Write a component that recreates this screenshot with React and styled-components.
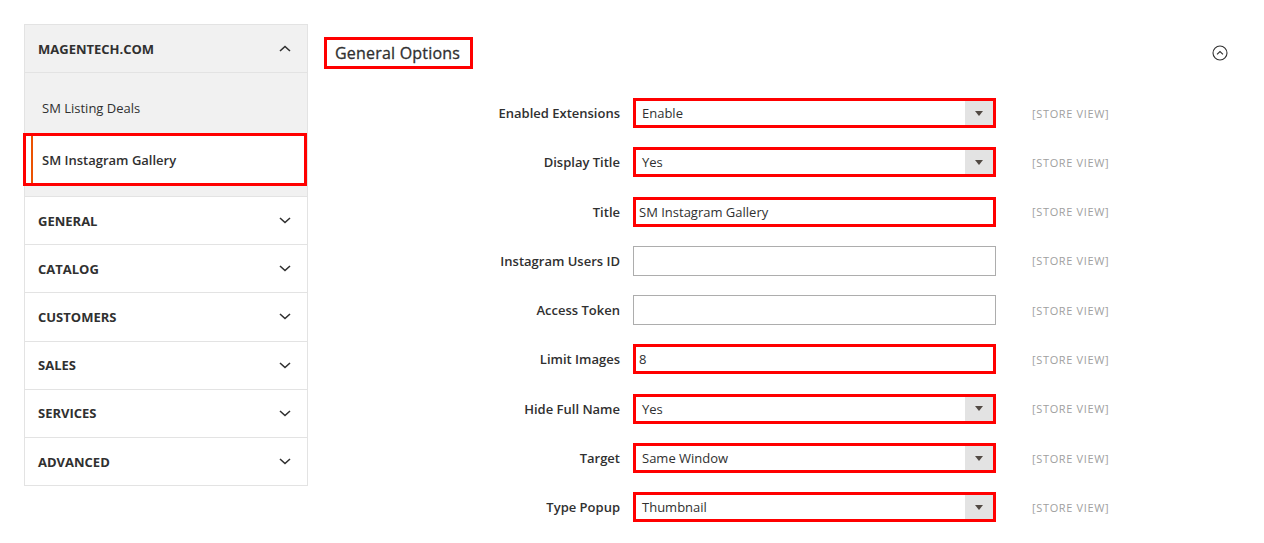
import React from 'react';
import styled, { createGlobalStyle } from 'styled-components';

const GlobalStyle = createGlobalStyle`
  body {
    margin: 0;
    background: #ffffff;
    font-family: 'Open Sans', 'Noto Sans', sans-serif;
    color: #303030;
  }
`;

const sections = ['GENERAL', 'CATALOG', 'CUSTOMERS', 'SALES', 'SERVICES', 'ADVANCED'];

const fields = [
  { label: 'Enabled Extensions', type: 'select', value: 'Enable', marked: true },
  { label: 'Display Title', type: 'select', value: 'Yes', marked: true },
  { label: 'Title', type: 'text', value: 'SM Instagram Gallery', marked: true },
  { label: 'Instagram Users ID', type: 'text', value: '' },
  { label: 'Access Token', type: 'text', value: '' },
  { label: 'Limit Images', type: 'text', value: '8', marked: true },
  { label: 'Hide Full Name', type: 'select', value: 'Yes', marked: true },
  { label: 'Target', type: 'select', value: 'Same Window', marked: true },
  { label: 'Type Popup', type: 'select', value: 'Thumbnail', marked: true },
];

function Chevron({ up }) {
  return (
    <ChevronSvg viewBox="0 0 12 7" aria-hidden="true">
      <polyline
        points={up ? '1,6 6,1.5 11,6' : '1,1 6,5.5 11,1'}
        fill="none"
        stroke="#303030"
        strokeWidth="1.6"
      />
    </ChevronSvg>
  );
}

export default function App() {
  return (
    <>
      <GlobalStyle />
      <Page>
        <Sidebar>
          <GroupHeader>
            <span>MAGENTECH.COM</span>
            <Chevron up />
          </GroupHeader>
          <SubList>
            <SubItem>SM Listing Deals</SubItem>
            <SubItem active>SM Instagram Gallery</SubItem>
          </SubList>
          {sections.map((s) => (
            <SectionRow key={s}>
              <span>{s}</span>
              <Chevron />
            </SectionRow>
          ))}
        </Sidebar>

        <Main>
          <TitleBar>
            <SectionTitle>General Options</SectionTitle>
            <CollapseIcon viewBox="0 0 16 16" aria-hidden="true">
              <circle cx="8" cy="8" r="7" fill="none" stroke="#303030" strokeWidth="1.1" />
              <polyline points="5,9.3 8,6.5 11,9.3" fill="none" stroke="#303030" strokeWidth="1.1" />
            </CollapseIcon>
          </TitleBar>

          <Form>
            {fields.map((f) => (
              <React.Fragment key={f.label}>
                <Label>{f.label}</Label>
                {f.type === 'select' ? (
                  <Select marked={f.marked}>
                    <SelectValue>{f.value}</SelectValue>
                    <ArrowBox>
                      <svg width="8" height="5" viewBox="0 0 8 5" aria-hidden="true">
                        <polygon points="0,0 8,0 4,5" fill="#514943" />
                      </svg>
                    </ArrowBox>
                  </Select>
                ) : (
                  <TextInput marked={f.marked}>{f.value}</TextInput>
                )}
                <Scope>[STORE VIEW]</Scope>
              </React.Fragment>
            ))}
          </Form>
        </Main>
      </Page>
    </>
  );
}

const Page = styled.div`
  display: flex;
  align-items: flex-start;
  gap: 16px;
  padding: 24px 0 0 24px;
`;

const Sidebar = styled.nav`
  width: 284px;
  flex-shrink: 0;
  border: 1px solid #e3e3e3;
  box-sizing: border-box;
`;

const ChevronSvg = styled.svg`
  width: 12px;
  height: 7px;
  margin-right: 16px;
`;

const GroupHeader = styled.div`
  display: flex;
  align-items: center;
  justify-content: space-between;
  height: 47px;
  padding-left: 13px;
  background: #f1f1f1;
  border-bottom: 1px solid #e3e3e3;
  font-size: 13px;
  font-weight: 700;
`;

const SubList = styled.div`
  background: #f1f1f1;
  padding: 9px 0 10px;
`;

const SubItem = styled.div`
  display: flex;
  align-items: center;
  height: ${({ active }) => (active ? '53px' : '51px')};
  box-sizing: border-box;
  padding-left: ${({ active }) => (active ? '16px' : '17px')};
  font-size: 13px;
  font-weight: ${({ active }) => (active ? 600 : 400)};
  background: ${({ active }) => (active ? '#ffffff' : 'transparent')};
  border: ${({ active }) => (active ? '3px solid #ff0000' : 'none')};
  margin-left: ${({ active }) => (active ? '-2px' : '0')};
  box-shadow: ${({ active }) => (active ? 'inset 5px 0 0 #ffffff, inset 7px 0 0 #eb5202' : 'none')};
`;

const SectionRow = styled.div`
  display: flex;
  align-items: center;
  justify-content: space-between;
  height: 48.2px;
  padding-left: 13px;
  border-top: 1px solid #e3e3e3;
  font-size: 13px;
  font-weight: 700;
  box-sizing: border-box;
`;

const Main = styled.main`
  flex: 1;
  padding-top: 13px;
`;

const TitleBar = styled.div`
  display: flex;
  align-items: center;
  justify-content: space-between;
  padding-right: 36px;
`;

const SectionTitle = styled.h2`
  margin: 0;
  height: 32px;
  box-sizing: border-box;
  display: flex;
  align-items: center;
  padding: 0 10px 0 8px;
  border: 3px solid #ff0000;
  font-size: 16px;
  font-weight: 400;
  color: #303030;
  letter-spacing: 0.2px;
  -webkit-text-stroke: 0.3px #303030;
`;

const CollapseIcon = styled.svg`
  width: 16px;
  height: 16px;
`;

const Form = styled.div`
  display: grid;
  grid-template-columns: 296px 363px 1fr;
  grid-auto-rows: 30px;
  row-gap: 19.3px;
  column-gap: 13px;
  margin-top: 29px;
  align-items: center;
`;

const Label = styled.div`
  text-align: right;
  font-size: 13px;
  font-weight: 600;
  color: #303030;
`;

const fieldBorder = ({ marked }) =>
  marked ? '3px solid #ff0000' : '1px solid #adadad';

const Select = styled.div`
  display: flex;
  align-items: stretch;
  height: 30px;
  box-sizing: border-box;
  border: ${fieldBorder};
  background: #ffffff;
`;

const SelectValue = styled.div`
  flex: 1;
  display: flex;
  align-items: center;
  padding-left: 6px;
  font-size: 13px;
  color: #303030;
`;

const ArrowBox = styled.div`
  width: 28px;
  display: flex;
  align-items: center;
  justify-content: center;
  background: #e3e3e3;
`;

const TextInput = styled.div`
  height: 30px;
  box-sizing: border-box;
  display: flex;
  align-items: center;
  padding-left: ${({ marked }) => (marked ? '3px' : '5px')};
  border: ${fieldBorder};
  font-size: 13px;
  color: #303030;
`;

const Scope = styled.div`
  padding-left: 23px;
  font-size: 11px;
  color: #a0a0a0;
  letter-spacing: 0.65px;
`;
